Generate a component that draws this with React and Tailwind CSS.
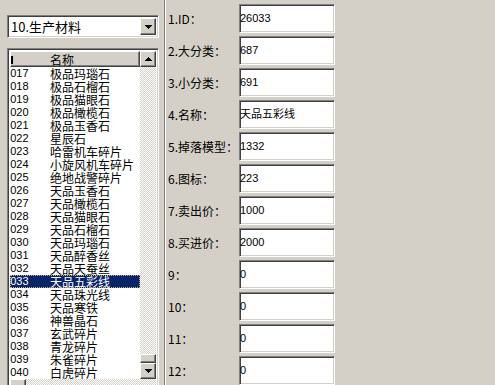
import React from 'react';

const items = [
  ['017', '极品玛瑙石'],
  ['018', '极品石榴石'],
  ['019', '极品猫眼石'],
  ['020', '极品橄榄石'],
  ['021', '极品玉香石'],
  ['022', '星辰石'],
  ['023', '哈雷机车碎片'],
  ['024', '小旋风机车碎片'],
  ['025', '绝地战警碎片'],
  ['026', '天品玉香石'],
  ['027', '天品橄榄石'],
  ['028', '天品猫眼石'],
  ['029', '天品石榴石'],
  ['030', '天品玛瑙石'],
  ['031', '天品醉香丝'],
  ['032', '天品天蚕丝'],
  ['033', '天品五彩线'],
  ['034', '天品珠光线'],
  ['035', '天品寒铁'],
  ['036', '神兽晶石'],
  ['037', '玄武碎片'],
  ['038', '青龙碎片'],
  ['039', '朱雀碎片'],
  ['040', '白虎碎片'],
];

const fields = [
  ['1.ID：', '26033'],
  ['2.大分类：', '687'],
  ['3.小分类：', '691'],
  ['4.名称：', '天品五彩线'],
  ['5.掉落模型：', '1332'],
  ['6.图标：', '223'],
  ['7.卖出价：', '1000'],
  ['8.买进价：', '2000'],
  ['9：', '0'],
  ['10：', '0'],
  ['11：', '0'],
  ['12：', '0'],
];

const raised =
  'bg-[#d4d0c8] border border-t-white border-l-white border-b-[#404040] border-r-[#404040] shadow-[inset_-1px_-1px_0_#808080]';
const sunken =
  'border border-t-[#808080] border-l-[#808080] border-b-white border-r-white shadow-[inset_1px_1px_0_#404040,inset_-1px_-1px_0_#d4d0c8]';

function Arrow({ up }) {
  return (
    <svg width="7" height="4" viewBox="0 0 7 4" className={up ? 'rotate-180' : ''}>
      <path d="M0 0h7v1h-1v1h-1v1h-1v1h-1v-1h-1v-1h-1v-1h-1z" fill="#000" />
    </svg>
  );
}

function ScrollButton({ up }) {
  return (
    <div className={`w-[16px] h-[16px] shrink-0 flex items-center justify-center ${raised}`}>
      <Arrow up={up} />
    </div>
  );
}

export default function App() {
  return (
    <div className="w-[495px] h-[385px] bg-[#d4d0c8] flex overflow-hidden font-['Liberation_Sans','Noto_Sans_CJK_SC',sans-serif] text-black">
      {/* Left panel */}
      <div className="w-[165px] shrink-0 pl-[7px] pt-[15px] border-r border-[#808080]">
        {/* Combo box */}
        <div className={`w-[152px] h-[23px] bg-white flex items-center p-[2px] ${sunken}`}>
          <span className="flex-1 pl-[1px] text-[13px] leading-[17px] font-['Noto_Sans_CJK_SC',sans-serif]">10.生产材料</span>
          <div className={`w-[16px] h-[17px] flex items-center justify-center ${raised}`}>
            <Arrow />
          </div>
        </div>

        {/* List view */}
        <div className={`mt-[10px] w-[152px] h-[350px] bg-white p-[2px] flex flex-col ${sunken}`}>
          <div className="flex h-[331px]">
            <div className="w-[132px] overflow-hidden flex flex-col">
              <div className={`h-[16px] shrink-0 relative flex items-center ${raised}`}>
                <div className="absolute left-0 top-[4px] w-[2px] h-[8px] bg-black" />
                <span className="ml-[39px] text-[12px] leading-[13px] font-['Noto_Sans_CJK_SC',sans-serif]">名称</span>
              </div>
              {items.map(([id, name]) => {
                const sel = id === '033';
                return (
                  <div
                    key={id}
                    className={`flex h-[13px] shrink-0 items-center ${
                      sel ? 'bg-[#0a246a] text-white outline-1 outline-dotted outline-offset-[-1px] outline-[#c8b070]' : ''
                    }`}
                  >
                    <div className="w-[40px] overflow-hidden whitespace-nowrap text-[11px] leading-[13px]">
                      <span className="ml-[-12px] inline-block">26{id}</span>
                    </div>
                    <span className="text-[12px] leading-[13px] whitespace-nowrap font-['Noto_Sans_CJK_SC',sans-serif]">{name}</span>
                  </div>
                );
              })}
            </div>
            {/* Vertical scroll bar */}
            <div className="w-[16px] flex flex-col">
              <ScrollButton up />
              <div className="flex-1 bg-[repeating-conic-gradient(#ffffff_0_25%,#d4d0c8_0_50%)] bg-[length:2px_2px] flex flex-col justify-end">
                <div className={`h-[9px] ${raised}`} />
              </div>
              <ScrollButton />
            </div>
          </div>
          {/* Horizontal scroll bar (cut off) */}
          <div className="flex h-[16px] bg-[repeating-conic-gradient(#ffffff_0_25%,#d4d0c8_0_50%)] bg-[length:2px_2px]">
            <div className={`w-[16px] h-[16px] ${raised}`} />
          </div>
        </div>
      </div>
      <div className="w-px shrink-0 bg-white" />

      {/* Right panel */}
      <div className="pl-[2px] pt-[4px] flex flex-col gap-[3px]">
        {fields.map(([label, value]) => (
          <div key={label} className="flex items-center h-[29px]">
            <span className="w-[71px] text-[12px] leading-[14px] whitespace-nowrap font-['Noto_Sans_CJK_SC',sans-serif]">
              {label}
            </span>
            <div className={`w-[96px] h-[29px] bg-white flex items-center ${sunken}`}>
              <span className="text-[11px] leading-[13px] whitespace-nowrap">{value}</span>
            </div>
          </div>
        ))}
      </div>
    </div>
  );
}
